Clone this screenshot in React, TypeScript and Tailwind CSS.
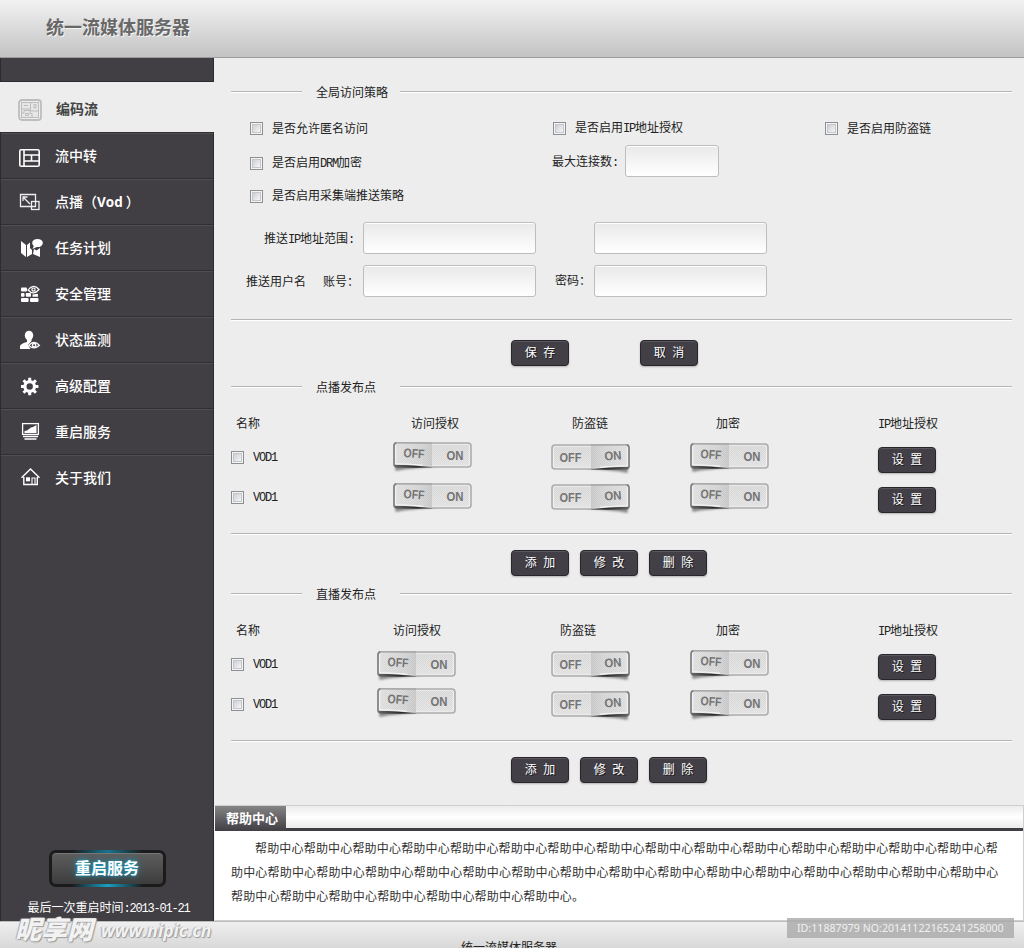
import React, { useId } from 'react';
import clsx from 'clsx';

// half-width latin inside the 12px chinese text
const Half: React.FC<{ children: React.ReactNode }> = ({ children }) => (
  <span className="font-['Liberation_Mono'] tracking-[-1.2px]">{children}</span>
);

const Check: React.FC<{ label: React.ReactNode; className?: string }> = ({ label, className }) => (
  <label className={clsx('flex items-center gap-[9px]', className)}>
    <span className="h-[13px] w-[13px] shrink-0 border border-[#8e8f8f] bg-[#f4f4f4] p-[1px]">
      <span className="block h-full w-full border border-[#c3c7cc] bg-gradient-to-br from-[#cbcfd5] to-[#f6f6f6]" />
    </span>
    <span>{label}</span>
  </label>
);

const Field: React.FC<{ className: string }> = ({ className }) => (
  <input
    className={clsx(
      'h-8 rounded-[3px] border border-[#bdbdbd] bg-gradient-to-b from-[#e9e9e9] to-white shadow-[inset_0_1px_0_#fff] outline-none',
      className
    )}
  />
);

const DarkButton: React.FC<{ children: React.ReactNode; className?: string }> = ({ children, className }) => (
  <button
    className={clsx(
      'h-[26px] w-[58px] rounded-[4px] border border-[#2a252b] bg-[#423f46] leading-none text-white shadow-[inset_0_1px_0_#5a565d,0_1px_2px_rgba(0,0,0,0.25)] [text-shadow:1px_1px_0_#1c1a1e] [word-spacing:3px]',
      className
    )}
  >
    {children}
  </button>
);

const Rule: React.FC<{ className?: string }> = ({ className }) => (
  <div className={clsx('h-[2px] border-t border-[#b5b5b5] bg-white', className)} />
);

const Legend: React.FC<{ children: React.ReactNode; className?: string }> = ({ children, className }) => (
  <div className={clsx('flex h-5 items-center', className)}>
    <Rule className="w-[71px]" />
    <h2 className="w-[98px] pl-[14px] pt-[2px]">{children}</h2>
    <Rule className="flex-1" />
  </div>
);

const Switch: React.FC<{ on?: boolean; className?: string }> = ({ on, className }) => {
  const id = useId().replace(/\W/g, '');
  return (
    <svg width="79" height="33" viewBox="0 0 79 33" className={clsx('shrink-0', className)}>
      <defs>
        <linearGradient id={`${id}s`} x1="0" x2="1">
          <stop offset="0" stopColor="#666" />
          <stop offset="0.6" stopColor="#2a2a2a" />
          <stop offset="1" stopColor="#777" />
        </linearGradient>
        <linearGradient id={`${id}b`} x1="0" x2="1">
          <stop offset="0" stopColor="#e6e6e6" />
          <stop offset="0.7" stopColor="#dadada" />
          <stop offset="1" stopColor="#cfcfcf" />
        </linearGradient>
        <linearGradient id={`${id}r`} x1="0" x2="0" y1="0" y2="1">
          <stop offset="0" stopColor="#e0e0e0" />
          <stop offset="1" stopColor="#e9e9e9" />
        </linearGradient>
        <pattern id={`${id}p`} width="2" height="2" patternUnits="userSpaceOnUse">
          <rect width="1" height="1" fill="#000" fillOpacity="0.05" />
          <rect x="1" y="1" width="1" height="1" fill="#000" fillOpacity="0.05" />
        </pattern>
        <filter id={`${id}g`} x="-20%" y="-50%" width="140%" height="200%">
          <feGaussianBlur stdDeviation="0.9" />
        </filter>
      </defs>
      <g transform={on ? 'translate(79 0) scale(-1 1)' : undefined}>
        <path d="M2 22 L2.5 29 Q18 26 46 24.5Z" fill="#000" fillOpacity="0.42" filter={`url(#${id}g)`} />
        <rect x="1" y="1" width="77" height="24" rx="3" fill={`url(#${id}r)`} stroke="#adadad" strokeWidth="1.6" />
        <rect x="2.6" y="2.6" width="73.8" height="20.8" rx="2" fill="none" stroke="#f4f4f4" strokeWidth="0.8" />
        <rect x="39" y="2" width="37" height="22" fill={`url(#${id}p)`} />
        <path d="M3 1.4 L39 2 V24 L3 22.5Z" fill={`url(#${id}b)`} />
        <path d="M3 1.4 L39 2 V24 L3 22.5Z" fill={`url(#${id}p)`} />
        <path d="M1 22.8 Q22 23 39 25.2 L39 25.8 H4 Q1 25.8 1 22.8Z" fill={`url(#${id}s)`} />
        <path d="M3 21.8 Q16 21.8 30 23.2" stroke="#f8f8f8" fill="none" />
        <path d="M3.5 0.8 Q1 1 1 4 V23.5" stroke="#808080" strokeWidth="1.5" fill="none" />
        <path d="M3.5 0.8 L39 1" stroke="#999" strokeWidth="0.8" fill="none" />
        <path d="M2.7 3 V22" stroke="#f2f2f2" fill="none" />
      </g>
      <g fill="#747474" className="font-['Liberation_Sans'] text-[12.5px] font-bold">
        <text
          x={on ? 8.5 : 10.5}
          y={on ? 17.5 : 15.7}
          textLength={on ? 22 : 21}
          lengthAdjust="spacingAndGlyphs"
          transform={on ? undefined : 'rotate(4 20 12)'}
        >
          OFF
        </text>
        <text
          x="53.5"
          y={on ? 16 : 18.2}
          textLength="17"
          lengthAdjust="spacingAndGlyphs"
          transform={on ? 'rotate(-4 62 12)' : undefined}
        >
          ON
        </text>
      </g>
    </svg>
  );
};

const menu: { label: React.ReactNode; icon: React.ReactNode }[] = [
  {
    label: '流中转',
    icon: (
      <g fill="none" stroke="#fff" strokeWidth="1.6">
        <rect x="1.8" y="5.8" width="19.4" height="16.4" rx="1.5" />
        <path d="M6 6V22M6 11H21M6 17H21M13.5 11V17" />
      </g>
    ),
  },
  {
    label: (
      <>
        点播（<span className="font-['Open_Sans'] text-[13.5px] font-bold">Vod</span>
        <span className="ml-[3px]">）</span>
      </>
    ),
    icon: (
      <g fill="none" stroke="#eee" strokeWidth="1.3">
        <path d="M13 16.5H2.5V4.5H17.5V11" />
        <rect x="13.5" y="11.5" width="7.5" height="8" />
        <path d="M13.5 16.5H17.5V11.5M5.5 7.5L12 14M5 11V7H9.5" />
      </g>
    ),
  },
  {
    label: '任务计划',
    icon: (
      <g fill="#fff">
        <path d="M3 5L8 9V21L3 17ZM9 9L12 6.5V12L14 14V18L9 21ZM16 13L18.5 14.5L22 12V21L15 18Z" />
        <ellipse cx="19.5" cy="7" rx="5.3" ry="4.1" />
        <path d="M16 9.5L14.5 13L20 10.5Z" />
      </g>
    ),
  },
  {
    label: '安全管理',
    icon: (
      <g fill="#fff">
        <rect x="3" y="5.5" width="6" height="4" rx="1" />
        <rect x="3" y="11" width="3.5" height="3.8" rx="0.7" />
        <rect x="7.8" y="11" width="5.2" height="3.8" rx="0.8" />
        <path d="M14.5 12.5L20 11.8V14.8H14.5Z" />
        <rect x="3" y="16" width="7.6" height="4" rx="1" />
        <rect x="12" y="16" width="8.5" height="4" rx="1" />
        <path d="M10 8Q15.5 1 21 7.5Q15.5 14 10 8Z" fill="#413e44" stroke="#fff" strokeWidth="1.2" />
        <circle cx="15.5" cy="7.6" r="1.6" fill="none" stroke="#fff" strokeWidth="1.2" />
      </g>
    ),
  },
  {
    label: '状态监测',
    icon: (
      <g fill="#fff">
        <ellipse cx="11" cy="7.5" rx="4.2" ry="4.8" />
        <path d="M9 11H13.5V13L10 17L12.5 21H2V18Q3 15.5 9 14Z" />
        <path d="M10.8 17.3Q16 11.5 21.5 17.3Q16 22.5 10.8 17.3Z" fill="#413e44" stroke="#fff" strokeWidth="1.2" />
        <circle cx="16.1" cy="17.2" r="1.7" fill="none" stroke="#fff" strokeWidth="1.4" />
      </g>
    ),
  },
  {
    label: '高级配置',
    icon: (
      <g fill="none" stroke="#fff">
        <circle cx="11.7" cy="12.5" r="4.8" strokeWidth="3.2" />
        <g strokeWidth="3">
          <path d="M11.7 3.8V7M11.7 18V21.2M3 12.5H6.2M17.2 12.5H20.4" />
          <path d="M5.5 6.3L8 8.8M15.4 16.2L17.9 18.7M17.9 6.3L15.4 8.8M8 16.2L5.5 18.7" />
        </g>
      </g>
    ),
  },
  {
    label: '重启服务',
    icon: (
      <g fill="none" stroke="#fff">
        <rect x="4.6" y="3.6" width="15.8" height="10.8" strokeWidth="1.3" />
        <path d="M6.5 13V11L9 10.5L13 7.5L15 7L18.5 5V13Z" fill="#fff" stroke="none" />
        <path d="M5 16.5H20M6.5 19H18.5" strokeWidth="1.4" />
      </g>
    ),
  },
  {
    label: '关于我们',
    icon: (
      <g fill="none" stroke="#fff" strokeWidth="1.4">
        <path d="M3.5 11.8L12.5 3L21.5 11.8M5.8 11V18.5H19.3V11" />
        <path d="M14 18.5V12H17V18.5" strokeWidth="1.1" />
        <rect x="8" y="11.3" width="4" height="4" fill="#fff" stroke="none" />
      </g>
    ),
  },
];

const Sidebar: React.FC = () => (
  <aside className="flex w-[214px] shrink-0 flex-col border-l border-r border-[#2d2a30] bg-[#413e44] text-white">
    <div className="-mx-px h-6 border border-t-0 border-[#2d2a30]" />
    <div className="-mx-px flex h-[50px] items-center bg-[#ededed] pl-[18px] pt-[5px] text-[14px] font-bold text-[#444]">
      <svg width="24" height="22" viewBox="0 0 24 22" fill="none" stroke="#bdbdbd">
        <rect x="1" y="1" width="22" height="20" rx="3" strokeWidth="1.8" />
        <rect x="3.5" y="3.5" width="17" height="15" fill="#e6e6e6" />
        <path d="M3.5 10H12.5M12.5 3.5V12H20.5M4 14H6V11.5H12V14.5H14V18M16 5.5H18V9H16ZM6 6.5H10M7.5 14.5H10.5V16.5H7.5Z" />
      </svg>
      <span className="-mt-[2px] ml-[14px]">编码流</span>
    </div>
    <ul className="flex-1 border-t border-[#302d33]">
      {menu.map((item, i) => (
        <li
          key={i}
          className="flex h-[46px] items-center border-b border-[#302d33] pl-[17px] shadow-[inset_0_1px_0_#504d54] last:border-b-transparent"
        >
          <svg width="26" height="24" viewBox="0 0 26 24">
            {item.icon}
          </svg>
          <span className="ml-[11px] text-[14px] font-medium">{item.label}</span>
        </li>
      ))}
    </ul>
    <div className="-mx-px flex flex-col items-center">
      <button className="relative h-[37px] w-[117px] rounded-[7px] border-[3px] border-[#1b1b1c] bg-gradient-to-b from-[#5e5e5e] to-[#3d3d3d] text-[16px] font-bold leading-none text-white shadow-[inset_0_1px_0_#777] [text-shadow:0_0_3px_#1c9dbf,0_0_7px_#1c9dbf]">
        重启服务
        <span className="absolute -top-[3px] left-5 right-5 h-[3px] bg-gradient-to-r from-transparent via-[#17758e] to-transparent" />
        <span className="absolute -bottom-[3px] left-5 right-5 h-[3px] bg-gradient-to-r from-transparent via-[#17a0c4] to-transparent" />
      </button>
      <p className="mb-[4px] mt-[12px] h-[18px] pl-[3px] leading-[18px]">
        最后一次重启时间<Half>:2013-01-21</Half>
      </p>
    </div>
  </aside>
);

interface PointProps {
  title: string;
  className: string;
  headCols: string;
  rowCols: string;
  // vertical nudge of the three switches in every row
  rows: [string, string, string][];
}

const PublishPoints: React.FC<PointProps> = ({ title, className, headCols, rowCols, rows }) => (
  <section>
    <Legend className={className}>{title}</Legend>
    <div className={clsx('mt-4 grid h-5 items-center pt-[2px]', headCols)}>
      <span className="pl-[5px]">名称</span>
      <span>访问授权</span>
      <span>防盗链</span>
      <span>加密</span>
      <span>
        <Half>IP</Half>地址授权
      </span>
    </div>
    <div className="mt-[7px]">
      {rows.map((row, i) => (
        <div key={i} className={clsx('grid h-10', rowCols)}>
          <Check className="h-[35px]" label={<Half>VOD1</Half>} />
          <Switch className={row[0]} />
          <Switch on className={row[1]} />
          <Switch className={row[2]} />
          <DarkButton className="mt-[7px]">设 置</DarkButton>
        </div>
      ))}
    </div>
    <Rule className="mt-[13px]" />
    <div className="mt-[15px] flex gap-[11px] pl-[280px]">
      <DarkButton>添 加</DarkButton>
      <DarkButton>修 改</DarkButton>
      <DarkButton>删 除</DarkButton>
    </div>
  </section>
);

const AccessPolicy: React.FC = () => (
  <section>
    <Legend>全局访问策略</Legend>
    <div className="mt-[10px] grid h-[33px] grid-cols-[303px_272px_auto] items-center pl-[19px]">
      <Check label="是否允许匿名访问" />
      <Check label={<>是否启用<Half>IP</Half>地址授权</>} />
      <Check label="是否启用防盗链" />
    </div>
    <div className="grid h-[33px] grid-cols-[302px_auto] items-center pl-[19px]">
      <Check className="pt-1" label={<>是否启用<Half>DRM</Half>加密</>} />
      <div className="-mt-px flex items-center">
        <span className="w-[73px] pt-[3px]">
          最大连接数<Half>:</Half>
        </span>
        <Field className="w-[94px]" />
      </div>
    </div>
    <div className="flex h-[35px] items-center pl-[19px] pt-px">
      <Check label="是否启用采集端推送策略" />
    </div>
    <div className="mt-[9px] flex items-center pl-[33px]">
      <span className="w-[99px] pt-[2px]">
        推送<Half>IP</Half>地址范围<Half>:</Half>
      </span>
      <Field className="w-[173px]" />
      <Field className="ml-[58px] w-[173px]" />
    </div>
    <div className="mt-[11px] flex items-center pl-[15px]">
      <span className="w-[77px] pt-[2px]">推送用户名</span>
      <span className="w-10 pt-[2px]">账号：</span>
      <Field className="w-[173px]" />
      <span className="ml-[19px] w-[39px]">密码：</span>
      <Field className="w-[173px]" />
    </div>
    <Rule className="mt-[22px]" />
    <div className="mt-[19px] flex gap-[71px] pl-[280px]">
      <DarkButton>保 存</DarkButton>
      <DarkButton>取 消</DarkButton>
    </div>
  </section>
);

const HelpCenter: React.FC = () => (
  <section className="mt-[22px] flex flex-1 flex-col border border-[#cfcfcf] border-l-[#f5f5f5] bg-white">
    <div className="flex h-[25px] border-b-[3px] border-[#413e44] bg-gradient-to-b from-[#ececec] via-white to-[#ececec]">
      <h2 className="h-[25px] w-[71px] bg-gradient-to-b from-[#858585] to-[#413e44] pl-[11px] text-[13px] font-bold leading-[25px] text-white">
        帮助中心
      </h2>
    </div>
    <p className="w-[790px] pl-4 pt-[6px] indent-6 leading-6 tracking-[0.18px] text-[#333]">
      {'帮助中心'.repeat(38) + '。'}
    </p>
  </section>
);

export default function App() {
  return (
    <div className="relative flex h-[948px] w-[1024px] flex-col overflow-hidden bg-[#ededed] font-['Liberation_Sans','Noto_Sans_CJK_SC',sans-serif] text-[12px] leading-4 text-[#222]">
      <header className="flex h-[58px] shrink-0 items-center border-b border-[#9c9c9c] bg-gradient-to-b from-[#f2f2f2] to-[#c3c3c3] pb-[2px] pl-[46px]">
        <h1 className="text-[18px] font-bold text-[#686868] [text-shadow:1px_1px_0_#f4f4f4]">统一流媒体服务器</h1>
      </header>

      <div className="flex h-[863px] shrink-0">
        <Sidebar />
        <main className="flex flex-1 flex-col">
          <div className="pl-[17px] pr-3 pt-6">
            <AccessPolicy />
            <PublishPoints
              title="点播发布点"
              className="mt-[11px]"
              headCols="grid-cols-[180px_161px_144px_162px_auto]"
              rowCols="grid-cols-[162px_158px_139px_188px_auto]"
              rows={[
                ['mt-[2px]', 'mt-[4px]', 'mt-[3px]'],
                ['mt-[3px]', 'mt-[4px]', 'mt-[3px]'],
              ]}
            />
            <PublishPoints
              title="直播发布点"
              className="mt-2"
              headCols="grid-cols-[162px_167px_156px_162px_auto]"
              rowCols="grid-cols-[146px_174px_139px_188px_auto]"
              rows={[
                ['mt-[4px]', 'mt-[4px]', 'mt-[3px]'],
                ['mt-[1px]', 'mt-[4px]', 'mt-[3px]'],
              ]}
            />
          </div>
          <HelpCenter />
        </main>
      </div>

      <footer className="h-[27px] shrink-0 overflow-hidden border-t border-[#bcbcbc] bg-gradient-to-b from-[#efefef] to-[#d8d8d8] pt-[18px] text-center">
        <span className="mr-[6px]">统一流媒体服务器</span>
      </footer>

      {/* stock site marks over the page */}
      <div className="absolute left-[15px] top-[917px] flex items-center italic text-[#f2f2f2] [text-shadow:1px_1px_1px_#999,-1px_0_1px_#aaa]">
        <span className="w-[86px] text-[26px] font-black leading-[26px]">昵享网</span>
        <span className="font-['Open_Sans'] text-[17.5px] font-bold leading-[26px]">www.nipic.cn</span>
      </div>
      <div className="absolute left-[787px] top-[918px] h-5 w-[227px] bg-[#a9a9a9]/80 pl-[10px] font-['Noto_Sans'] text-[10.65px] leading-5 text-[#f1f1f1]">
        ID:11887979 NO:20141122165241258000
      </div>
    </div>
  );
}
